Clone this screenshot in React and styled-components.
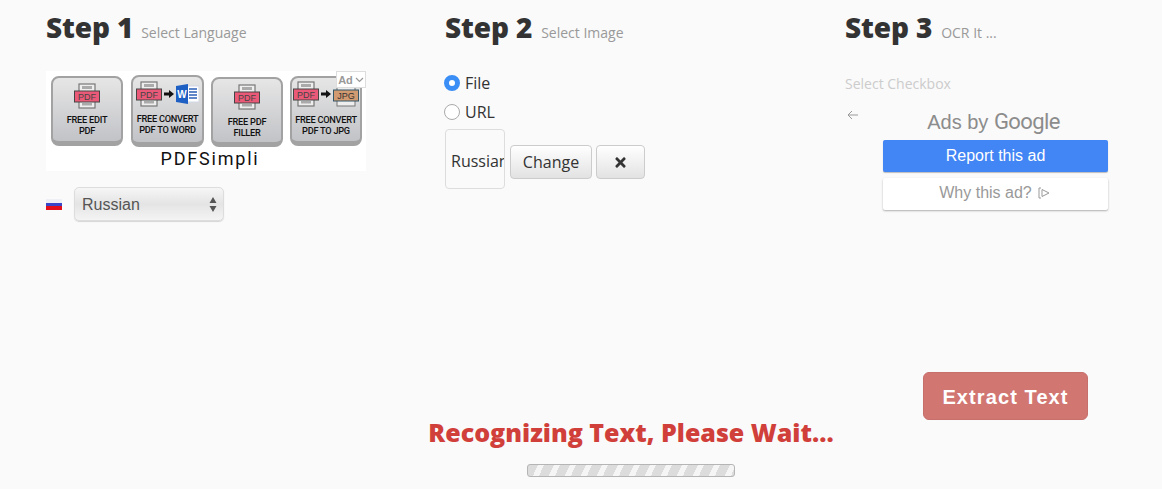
import React from "react";
import styled, { createGlobalStyle } from "styled-components";
import { FaTimes } from "react-icons/fa";

const Global = createGlobalStyle`
  html, body { margin: 0; padding: 0; background: #fafafa; height: 489px; overflow: hidden; }
  * { box-sizing: border-box; }
`;

const Page = styled.div`
  width: 1162px; height: 489px; overflow: hidden;
  font-family: "Open Sans", sans-serif; color: #333;
`;
const Columns = styled.div`
  display: grid; grid-template-columns: 400px 400px 271px;
  padding: 8px 0 0 45px; height: 372px;
`;
const Column = styled.section`display: flex; flex-direction: column; align-items: flex-start;`;
const Heading = styled.div`
  display: flex; align-items: baseline; gap: ${p => p.$gap || 9}px; height: 39px; margin-left: ${p => p.$indent || 0}px;
`;
const StepTitle = styled.h2`
  margin: 0; font: 800 28px/39px "Open Sans", sans-serif; color: #333; letter-spacing: -0.15px;
`;
const StepHint = styled.span`font-size: 14px; color: #999;`;

const AdBanner = styled.div`
  position: relative; width: 320px; height: 100px; margin: 24px 0 0 1px; background: #fff;
  display: flex; flex-direction: column;
`;
const TileRow = styled.div`display: flex; padding: 5px 0 0 5px; gap: 7px; height: 79px; align-items: flex-start;`;
const Tile = styled.div`
  width: ${p => p.$w || 72}px; height: ${p => p.$h || 70}px; margin-top: ${p => p.$top || 0}px; margin-left: ${p => p.$ml || 0}px;
  border: 2px solid #a2a2a2; border-bottom-width: 5px; border-radius: 8px;
  background: linear-gradient(#e6e6e6, #c2c3c7);
  display: flex; flex-direction: column; align-items: center;
  padding-top: ${p => p.$pad ?? 4}px;
`;
const TileIcons = styled.div`display: flex; align-items: center; gap: 2px; height: 27px;`;
const TileLabel = styled.div`
  margin-top: ${p => p.$mt ?? 5}px; text-align: center;
  font: 500 9.2px/11px Roboto, sans-serif; color: #111; letter-spacing: -0.25px; white-space: nowrap;
`;
const Brand = styled.div`
  padding-left: 8px; text-align: center; font: 400 18px/20px Roboto, sans-serif; letter-spacing: 1.8px; color: #111; margin-top: -1px;
`;
const AdTag = styled.div`
  position: absolute; top: 0; right: 0; width: 30px; height: 17px; background: #fff;
  border: 1px solid #ddd; display: flex; align-items: center; justify-content: center; gap: 2px;
  font: 700 11px "Liberation Sans", sans-serif; color: #999;
`;
const LanguageRow = styled.div`display: flex; align-items: center; gap: 12px; margin: 16px 0 0 1px;`;
const Flag = styled.div`
  width: 16px; height: 11px;
  background: linear-gradient(#eef0f6 0 33%, #3a46c8 33% 66%, #e3101c 66%);
`;
const SelectBox = styled.div`position: relative; width: 150px; height: 34px;`;
const LanguageSelect = styled.select`
  appearance: none; width: 100%; height: 100%; padding: 0 7px;
  font: 16px "Liberation Sans", sans-serif; color: #555;
  border: 1px solid #ddd; border-radius: 5px;
  background: linear-gradient(#f6f6f6, #e4e4e4 50%, #f4f4f4);
  box-shadow: 0 1px 1px rgba(0,0,0,.15);
`;
const SelectArrows = styled.svg`position: absolute; right: 7px; top: 10px; pointer-events: none;`;

const RadioGroup = styled.div`display: flex; flex-direction: column; margin-top: 21px; margin-left: -1px;`;
const RadioLabel = styled.label`
  display: flex; align-items: center; gap: 5px; height: 29px; font-size: 16px; color: #333;
`;
const Radio = styled.input`
  appearance: none; margin: 0; width: 16px; height: 16px; border-radius: 50%;
  background: #fff; border: 1px solid #aaa;
  &:checked { border: 5px solid #3b8ef5; }
`;
const FileRow = styled.div`display: flex; align-items: flex-end; gap: 4px; margin-top: 3px;`;
const Thumb = styled.div`
  width: 60px; height: 60px; border: 1px solid #ddd; border-radius: 4px; padding: 20px 0 0 5px;
  margin-right: 1px; overflow: hidden; font-size: 16px; line-height: 22px; white-space: nowrap; color: #333;
  background: #fafafa;
`;
const FileButton = styled.button`
  height: 34px; width: ${p => p.$w}px; margin-bottom: 10px; padding: 0;
  border: 1px solid #ccc; border-radius: 4px; font: 16px "Open Sans", sans-serif; color: #333;
  background: linear-gradient(#fff, #e2e2e2);
  display: flex; align-items: center; justify-content: center;
`;

const Muted = styled.div`margin-top: 27px; height: 20px; font-size: 14px; line-height: 20px; color: #ccc;`;
const AdFeedback = styled.div`display: flex; margin-top: 9px; padding-left: 2px; align-items: flex-start;`;
const BackArrow = styled.svg`margin-top: 7px; flex: none;`;
const FeedbackBody = styled.div`display: flex; flex-direction: column; margin: 6px 0 0 25px; width: 225px;`;
const AdsBy = styled.div`
  height: 27px; padding-right: 4px; text-align: center; font: 20px/25px "Liberation Sans", sans-serif; color: #8c8c8c; white-space: nowrap;
`;
const Logo = styled.span`font: 400 22px/25px Roboto, sans-serif; color: #8c8c8c; letter-spacing: -0.6px;`;
const ReportButton = styled.div`
  height: 32px; margin-top: 4px; background: #4285f4; border-radius: 2px; color: #fff;
  font: 16px/31px "Liberation Sans", sans-serif; text-align: center; box-shadow: 0 1px 1px rgba(0,0,0,.25);
`;
const WhyButton = styled.div`
  height: 32px; margin-top: 6px; padding: 0 2px 2px 0; background: #fff; border-radius: 2px; color: #999;
  font: 16px/28px "Liberation Sans", sans-serif; display: flex; justify-content: center; align-items: center; gap: 6px;
  box-shadow: 0 1px 2px rgba(0,0,0,.3);
`;

const ActionRow = styled.div`display: flex; justify-content: flex-end; padding-right: 74px;`;
const ExtractButton = styled.button`
  width: 165px; height: 48px; padding: 2px 0 0; border: 1px solid #c66f6b; border-radius: 6px; background: #d27672; color: #fff;
  font: 700 20px "Liberation Sans", sans-serif; letter-spacing: 1.1px;
`;
const Status = styled.div`padding-left: 100px; display: flex; flex-direction: column; align-items: center;`;
const StatusText = styled.div`
  font: 800 25px/24px "Open Sans", sans-serif; color: #d13f3a;
`;
const Progress = styled.div`
  width: 208px; height: 13px; margin-top: 20px; border: 1px solid #b5b5b5; border-radius: 3px;
  background: repeating-linear-gradient(115deg, #dcdcdc 0 9px, #f5f5f5 9px 14.5px);
`;

const PdfIcon = ({ w = 26 }) => (
  <svg width={w} height={w} viewBox="0 0 26 26">
    <rect x="5" y="1" width="16" height="24" fill="#eee" stroke="#777" strokeWidth="1.2" />
    <rect x="8" y="3" width="10" height="3" fill="#aaa" />
    <rect x="8" y="20" width="10" height="2.5" fill="#aaa" />
    <rect x="0.5" y="8" width="25" height="11" fill="#ea5a78" stroke="#444" strokeWidth="1" />
    <text x="13" y="17" textAnchor="middle" fontFamily="Liberation Sans, sans-serif" fontSize="9" fill="#444">PDF</text>
  </svg>
);
const WordIcon = () => (
  <svg width="23" height="20" viewBox="0 0 23 20">
    <rect x="10" y="2" width="13" height="16" fill="#fff" stroke="#cfd6e6" />
    <path d="M13 5h8M13 8h8M13 11h8M13 14h8" stroke="#2b5fb8" strokeWidth="1.6" />
    <path d="M0 2l12-2v20L0 18z" fill="#1e5fc4" />
    <text x="6" y="14" textAnchor="middle" fontFamily="Liberation Sans, sans-serif" fontWeight="700" fontSize="10" fill="#fff">W</text>
  </svg>
);
const JpgIcon = () => (
  <svg width="26" height="26" viewBox="0 0 26 26">
    <rect x="4" y="1" width="18" height="24" fill="#eee" stroke="#777" />
    <rect x="0.5" y="9" width="25" height="11" fill="#d19a70" stroke="#356" />
    <text x="13" y="18" textAnchor="middle" fontFamily="Liberation Sans, sans-serif" fontSize="9" fill="#333">JPG</text>
  </svg>
);
const ArrowRight = () => (
  <svg width="10" height="8" viewBox="0 0 10 8"><path d="M0 2.5h5V0l5 4-5 4V5.5H0z" fill="#111" /></svg>
);

export default function App() {
  return (
    <Page>
      <Global />
      <Columns>
        <Column>
          <Heading $indent={1} $gap={8}><StepTitle>Step 1</StepTitle><StepHint>Select Language</StepHint></Heading>
          <AdBanner>
            <TileRow>
              <Tile><TileIcons><PdfIcon /></TileIcons><TileLabel>FREE EDIT<br />PDF</TileLabel></Tile>
              <Tile $w={73} $h={72} $top={-1} $pad={3} $ml={1}>
                <TileIcons><PdfIcon /><ArrowRight /><WordIcon /></TileIcons>
                <TileLabel $mt={6}>FREE CONVERT<br />PDF TO WORD</TileLabel>
              </Tile>
              <Tile $top={1}><TileIcons><PdfIcon /></TileIcons><TileLabel $mt={6}>FREE PDF<br />FILLER</TileLabel></Tile>
              <Tile $pad={2}>
                <TileIcons><PdfIcon /><ArrowRight /><JpgIcon /></TileIcons>
                <TileLabel $mt={7}>FREE CONVERT<br />PDF TO JPG</TileLabel>
              </Tile>
            </TileRow>
            <Brand>PDFSimpli</Brand>
            <AdTag>Ad
              <svg width="9" height="6" viewBox="0 0 9 6"><path d="M1 1l3.5 3.5L8 1" fill="none" stroke="#999" strokeWidth="1.2" /></svg>
            </AdTag>
          </AdBanner>
          <LanguageRow>
            <Flag />
            <SelectBox>
              <LanguageSelect defaultValue="Russian"><option>Russian</option></LanguageSelect>
              <SelectArrows width="8" height="15" viewBox="0 0 8 15">
                <path d="M4 0l3.5 6h-7zM4 15L.5 9h7z" fill="#555" />
              </SelectArrows>
            </SelectBox>
          </LanguageRow>
        </Column>
        <Column>
          <Heading><StepTitle>Step 2</StepTitle><StepHint>Select Image</StepHint></Heading>
          <RadioGroup>
            <RadioLabel><Radio type="radio" name="src" defaultChecked />File</RadioLabel>
            <RadioLabel><Radio type="radio" name="src" />URL</RadioLabel>
          </RadioGroup>
          <FileRow>
            <Thumb>Russian</Thumb>
            <FileButton $w={82}>Change</FileButton>
            <FileButton $w={49}><FaTimes size={15} /></FileButton>
          </FileRow>
        </Column>
        <Column>
          <Heading><StepTitle>Step 3</StepTitle><StepHint>OCR It ...</StepHint></Heading>
          <Muted>Select Checkbox</Muted>
          <AdFeedback>
            <BackArrow width="11" height="10" viewBox="0 0 11 10">
              <path d="M11 5H1M5 1L1 5l4 4" fill="none" stroke="#999" strokeWidth="1" />
            </BackArrow>
            <FeedbackBody>
              <AdsBy>Ads by <Logo>Google</Logo></AdsBy>
              <ReportButton>Report this ad</ReportButton>
              <WhyButton>Why this ad?
                <svg width="12" height="12" viewBox="0 0 12 12">
                  <path d="M3 1H1v10h2M4 2.5v7l7-3.5z" fill="none" stroke="#999" strokeWidth="1" />
                </svg>
              </WhyButton>
            </FeedbackBody>
          </AdFeedback>
        </Column>
      </Columns>
      <ActionRow><ExtractButton>Extract Text</ExtractButton></ActionRow>
      <Status>
        <StatusText>Recognizing Text, Please Wait...</StatusText>
        <Progress />
      </Status>
    </Page>
  );
}
